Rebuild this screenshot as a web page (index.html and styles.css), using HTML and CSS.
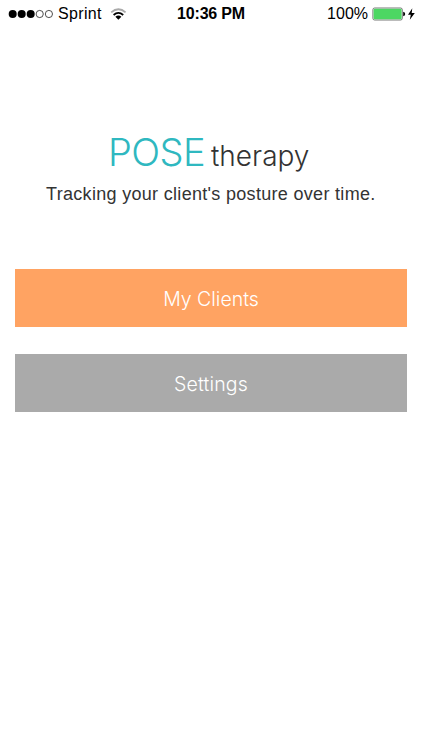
FILE: index.html
```html
<!DOCTYPE html>
<html lang="en">
<head>
<meta charset="utf-8">
<title>POSE therapy</title>
<link rel="stylesheet" href="styles.css">
</head>
<body>
<div class="status">
  <div class="carrier">
    <svg class="dots" width="46" height="10" viewBox="0 0 46 10"><g fill="#000"><circle cx="4.7" cy="5" r="4"/><circle cx="13.7" cy="5" r="4"/><circle cx="22.7" cy="5" r="4"/></g><g fill="none" stroke="#222" stroke-width=".8"><circle cx="31.7" cy="5" r="3.6"/><circle cx="40.9" cy="5" r="3.6"/></g></svg>
    <span class="network">Sprint</span>
    <svg class="wifi" width="17" height="13" viewBox="0 0 17 13"><g fill="none" stroke-width="1.8"><path d="M1.2 4.4Q8.4 -2 15.6 4.4" stroke="#aaa"/><path d="M3.6 7Q8.4 2.8 13.2 7" stroke="#000"/></g><path d="M5.4 8.8Q8.4 6.4 11.4 8.8L8.4 11.8Z"/></svg>
  </div>
  <div class="time">10:36 PM</div>
  <div class="power">
    <span class="percent">100%</span>
    <svg class="battery" width="44" height="14" viewBox="0 0 44 14"><rect x=".9" y="1" width="29.4" height="12" rx="1.7" fill="#fff" stroke="#555" stroke-width=".8"/><rect x="1.6" y="1.7" width="28" height="10.6" rx="1" fill="#4cd763"/><path d="M31.2 4.8Q33.2 5.2 33.2 7T31.2 9.2Z"/><path d="M40.3 1.2L36 7.8H38.8L37.8 12.8L42.8 6H39.7Z"/></svg>
  </div>
</div>
<main>
  <h1><span class="pose">POSE</span><span class="therapy">therapy</span></h1>
  <p class="tagline">Tracking your client's posture over time.</p>
  <nav>
    <button class="button clients"><span>My Clients</span></button>
    <button class="button settings"><span>Settings</span></button>
  </nav>
</main>
</body>
</html>
```
FILE: styles.css
```css
* { box-sizing: border-box; }
body { margin: 0; min-height: 750px; background: #fff; color: #000; font-family: "Liberation Sans", Arial, sans-serif; }
.status { display: grid; grid-template-columns: 1fr auto 1fr; align-items: center; height: 28px; padding: 0 7px 0 8px; font-size: 16px; line-height: 28px; white-space: nowrap; }
.carrier, .power { display: flex; align-items: center; }
.network { margin-left: 4px; letter-spacing: .35px; }
.wifi { margin-left: 8px; }
.time { position: relative; left: -1px; font-weight: 700; letter-spacing: -.2px; }
.power { justify-content: flex-end; }
.percent { margin-right: 4px; }
main { padding: 102px 16px 0 15px; }
h1 { display: flex; align-items: baseline; margin: 0 0 0 93px; height: 52px; line-height: 45px; font-family: Inter, sans-serif; font-weight: 300; white-space: nowrap; }
.pose { width: 103px; color: #2fb8c0; font-size: 38px; letter-spacing: -.6px; }
.therapy { color: #333; font-size: 28px; }
.tagline { margin: 0 0 0 31px; height: 87px; color: #333; font-size: 18px; line-height: 24px; letter-spacing: .31px; white-space: nowrap; }
nav { display: grid; gap: 27px; }
.button { display: block; height: 58px; padding: 2px 0 0; border: 0; color: #fff; font: 300 19.5px/56px Inter, sans-serif; text-align: center; }
.clients { background: #ffa362; }
.settings { background: #aaa; letter-spacing: .15px; }
```
